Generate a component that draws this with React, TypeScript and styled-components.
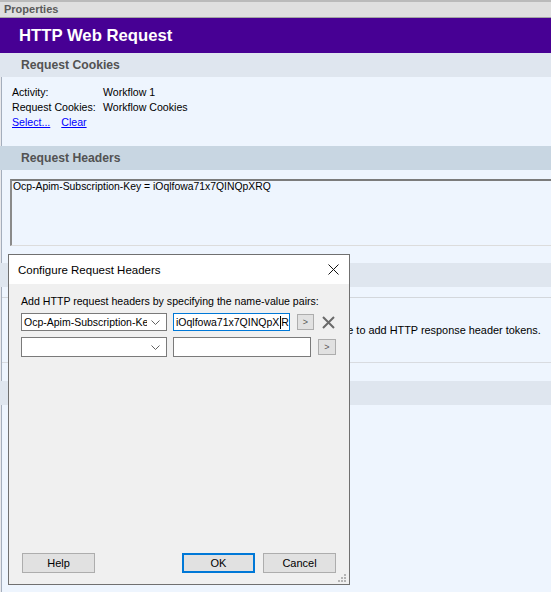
import React from "react";
import styled, { createGlobalStyle } from "styled-components";

const GlobalStyle = createGlobalStyle`
  html, body { margin: 0; padding: 0; }
  * { box-sizing: border-box; }
  body {
    width: 551px;
    height: 592px;
    overflow: hidden;
    background: #e9e9ec;
    font-family: "Liberation Sans", Arial, sans-serif;
  }
  #root { position: relative; width: 551px; height: 592px; overflow: hidden; }
`;

const Page = styled.div`
  display: flex;
  flex-direction: column;
  width: 551px;
  height: 592px;
`;

const TitleBar = styled.div`
  height: 18px;
  border-top: 2px solid #bababa;
  border-bottom: 1px solid #a4a4a4;
  background: #dfdfdf;
  padding-left: 4px;
  font-size: 11px;
  font-weight: bold;
  line-height: 15px;
  color: #5a5a5a;
`;

const Banner = styled.div`
  height: 35px;
  background: #470094;
  color: #ffffff;
  font-size: 16.7px;
  font-weight: bold;
  line-height: 36px;
  padding-left: 19px;
`;

const Content = styled.div`
  flex: 1;
  display: flex;
  flex-direction: column;
  margin-left: 1px;
  border-left: 1px solid #a4aebd;
  background: #eef5fe;
`;

const SectionHeader = styled.div<{ $active?: boolean }>`
  height: 24px;
  margin-left: -2px;
  padding-left: 21px;
  background: ${(p) => (p.$active ? "#c8d6e2" : "#dfe6ef")};
  color: #525252;
  font-size: 12.2px;
  font-weight: bold;
  line-height: 24px;
`;

const InfoGrid = styled.div`
  display: grid;
  grid-template-columns: 91px auto;
  padding: 8px 10px 16px;
  font-size: 10.6px;
  line-height: 15px;
  color: #000;
`;

const LinkRow = styled.div`
  grid-column: 1 / span 2;
  display: flex;
  gap: 11px;
`;

const Link = styled.a`
  color: #0000ff;
  text-decoration: underline;
  cursor: pointer;
`;

const HeaderBox = styled.div`
  height: 67px;
  margin: 9px 0 0 8px;
  border-top: 2px solid #7b7b7b;
  border-left: 2px solid #8a8a8a;
  border-bottom: 1px solid #dcdcdc;
  padding: 0 1px;
  font-size: 10.4px;
  line-height: 12px;
  color: #000;
`;

const Gap = styled.div<{ $h: number }>`
  height: ${(p) => p.$h}px;
`;

const InfoBox = styled.div`
  height: 66px;
  display: flex;
  align-items: center;
  padding-left: 22px;
  border-top: 1px solid #d3d7dc;
  border-bottom: 1px solid #d8dbe0;
  font-size: 10.9px;
  color: #000;
  white-space: nowrap;
`;

/* ---------- Dialog ---------- */

const Dialog = styled.div`
  position: absolute;
  left: 8px;
  top: 254px;
  width: 342px;
  height: 331px;
  display: flex;
  flex-direction: column;
  border: 1px solid #707070;
  background: #f0f0f0;
  font-family: "Liberation Sans", Arial, sans-serif;
`;

const DialogTitle = styled.div`
  height: 29px;
  flex-shrink: 0;
  display: flex;
  align-items: center;
  justify-content: space-between;
  padding: 0 10px 0 9px;
  background: #ffffff;
  font-size: 11.5px;
  color: #000;
`;

const DialogBody = styled.div`
  flex: 1;
  display: flex;
  flex-direction: column;
  padding: 11px 13px 11px 12px;
`;

const Prompt = styled.div`
  font-size: 10.6px;
  line-height: 13px;
  color: #000;
  white-space: nowrap;
`;

const Rows = styled.div`
  display: flex;
  flex-direction: column;
  gap: 6px;
  margin-top: 5px;
`;

const Row = styled.div<{ $h: number }>`
  display: flex;
  align-items: center;
  height: ${(p) => p.$h}px;
`;

const Combo = styled.div`
  width: 146px;
  height: 100%;
  display: flex;
  align-items: center;
  background: #ffffff;
  border: 1px solid #7a7a7a;
`;

const ComboText = styled.span`
  flex: 1;
  overflow: hidden;
  white-space: nowrap;
  padding-left: 2px;
  font-size: 10.5px;
  color: #000;
`;

const ComboArrow = styled.span`
  width: 19px;
  display: flex;
  justify-content: center;
  padding-right: 3px;
`;

const TextInput = styled.div<{ $w: number; $focus?: boolean }>`
  width: ${(p) => p.$w}px;
  height: 100%;
  margin-left: 6px;
  display: flex;
  align-items: center;
  overflow: hidden;
  white-space: nowrap;
  padding-left: 2px;
  background: #ffffff;
  border: 1px solid ${(p) => (p.$focus ? "#0078d7" : "#7a7a7a")};
  font-size: 10.5px;
  color: #000;
`;

const Caret = styled.span`
  flex-shrink: 0;
  width: 1px;
  height: 13px;
  margin: 0 0.5px;
  background: #000;
`;

const ArrowButton = styled.div<{ $w: number }>`
  width: ${(p) => p.$w}px;
  height: 16px;
  margin-left: 7px;
  display: flex;
  align-items: center;
  justify-content: center;
  background: #e1e1e1;
  border: 1px solid #adadad;
  font-size: 9px;
  color: #555;
`;

const RemoveIcon = styled.span`
  margin-left: 8px;
  display: flex;
`;

const Spacer = styled.div`
  flex: 1;
`;

const ButtonRow = styled.div`
  display: flex;
  align-items: center;
`;

const Button = styled.div<{ $default?: boolean }>`
  width: 73px;
  height: 20px;
  display: flex;
  align-items: center;
  justify-content: center;
  background: #e1e1e1;
  border: ${(p) => (p.$default ? "2px solid #0078d7" : "1px solid #adadad")};
  font-size: 11px;
  color: #000;
`;

const HelpButton = styled(Button)`
  margin-left: 1px;
`;

const CancelButton = styled(Button)`
  margin-left: 8px;
`;

const Grip = styled.svg`
  position: absolute;
  right: 2px;
  bottom: 1px;
`;

const Chevron = () => (
  <svg width="9" height="5" viewBox="0 0 9 5">
    <path d="M0.5 0.5 L4.5 4.5 L8.5 0.5" fill="none" stroke="#606060" strokeWidth="1" />
  </svg>
);

const CloseX = () => (
  <svg width="11" height="11" viewBox="0 0 11 11">
    <path d="M0.5 0.5 L10.5 10.5 M10.5 0.5 L0.5 10.5" stroke="#111" strokeWidth="1" />
  </svg>
);

const DeleteX = () => (
  <svg width="13" height="13" viewBox="0 0 13 13">
    <path d="M1 1 L12 12 M12 1 L1 12" stroke="#6a6a6a" strokeWidth="2" />
  </svg>
);

export default function App() {
  return (
    <>
      <GlobalStyle />
      <Page>
        <TitleBar>Properties</TitleBar>
        <Banner>HTTP Web Request</Banner>
        <Content>
          <SectionHeader>Request Cookies</SectionHeader>
          <InfoGrid>
            <span>Activity:</span>
            <span>Workflow 1</span>
            <span>Request Cookies:</span>
            <span>Workflow Cookies</span>
            <LinkRow>
              <Link>Select...</Link>
              <Link>Clear</Link>
            </LinkRow>
          </InfoGrid>
          <SectionHeader $active>Request Headers</SectionHeader>
          <HeaderBox>Ocp-Apim-Subscription-Key = iOqlfowa71x7QINQpXRQ</HeaderBox>
          <Gap $h={17} />
          <SectionHeader>Response Headers</SectionHeader>
          <Gap $h={10} />
          <InfoBox>
            No response headers defined. Select a response field and click here to add HTTP response header tokens.
          </InfoBox>
          <Gap $h={18} />
          <SectionHeader>Response Body</SectionHeader>
        </Content>
      </Page>

      <Dialog>
        <DialogTitle>
          <span>Configure Request Headers</span>
          <CloseX />
        </DialogTitle>
        <DialogBody>
          <Prompt>Add HTTP request headers by specifying the name-value pairs:</Prompt>
          <Rows>
            <Row $h={18}>
              <Combo>
                <ComboText>Ocp-Apim-Subscription-Key</ComboText>
                <ComboArrow>
                  <Chevron />
                </ComboArrow>
              </Combo>
              <TextInput $w={117} $focus>
                <span>iOqlfowa71x7QINQpX</span>
                <Caret />
                <span>R</span>
              </TextInput>
              <ArrowButton $w={17}>&gt;</ArrowButton>
              <RemoveIcon>
                <DeleteX />
              </RemoveIcon>
            </Row>
            <Row $h={20}>
              <Combo>
                <ComboText></ComboText>
                <ComboArrow>
                  <Chevron />
                </ComboArrow>
              </Combo>
              <TextInput $w={138} />
              <ArrowButton $w={18}>&gt;</ArrowButton>
            </Row>
          </Rows>
          <Spacer />
          <ButtonRow>
            <HelpButton>Help</HelpButton>
            <Spacer />
            <Button $default>OK</Button>
            <CancelButton>Cancel</CancelButton>
          </ButtonRow>
        </DialogBody>
        <Grip width="9" height="9" viewBox="0 0 9 9">
          <rect x="6" y="0" width="2" height="2" fill="#b4b4b4" />
          <rect x="3" y="3" width="2" height="2" fill="#b4b4b4" />
          <rect x="6" y="3" width="2" height="2" fill="#b4b4b4" />
          <rect x="0" y="6" width="2" height="2" fill="#b4b4b4" />
          <rect x="3" y="6" width="2" height="2" fill="#b4b4b4" />
          <rect x="6" y="6" width="2" height="2" fill="#b4b4b4" />
        </Grip>
      </Dialog>
    </>
  );
}
